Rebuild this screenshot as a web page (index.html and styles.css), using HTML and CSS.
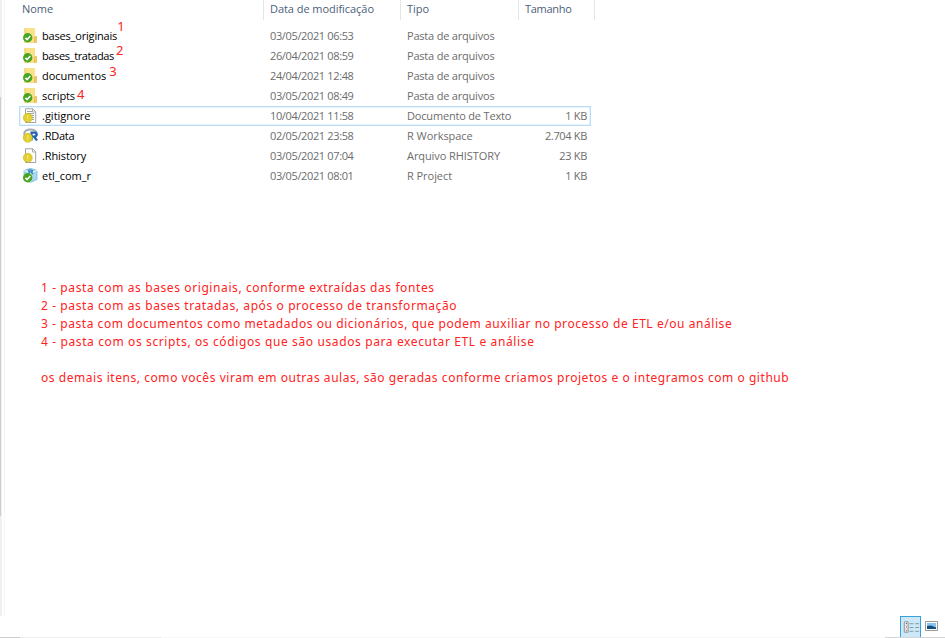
FILE: index.html
```
<!DOCTYPE html>
<html lang="pt-BR">
<head>
<meta charset="utf-8">
<title>etl_com_r</title>
<link rel="stylesheet" href="styles.css">
</head>
<body>
<svg class="defs" width="0" height="0" aria-hidden="true">
<defs>
<g id="check"><circle cx="4.700" cy="9.800" r="4.700" fill="#48a51f"/><path d="M2.400 9.900l1.700 1.700 3.200-3.500" fill="none" stroke="#fff" stroke-width="1.500"/></g>
<g id="pending"><circle cx="4.800" cy="9.800" r="4.500" fill="#e2cf2e" stroke="#c8b526" stroke-width=".6"/><path d="M4.800 7v4M4.800 11.800v1" stroke="#f1e58a" stroke-width="1.100"/></g>
<g id="folder"><path d="M1.500 0H12v15H1.500z" fill="#fbe08a"/><path d="M1.500 0h1v15h-1z" fill="#edc95f"/><path d="M11.500 9l2-1v6.500h-2z" fill="#f3cb58" stroke="#dfb246" stroke-width=".6"/></g>
<g id="page"><path d="M2.500.8h7.200l3 3v10.700H2.500z" fill="#fff" stroke="#999" stroke-width=".9"/><path d="M9.500.8v3.200h3.200" fill="none" stroke="#999" stroke-width=".8"/></g>
</defs>
</svg>
<main class="window">
<aside class="nav"><div class="nav-thumb"></div></aside>
<section class="content">
<header class="grid head"><span class="c-name">Nome</span><span class="c-date">Data de modificação</span><span class="c-type">Tipo</span><span class="c-size">Tamanho</span></header>
<div class="files">
<div class="grid row"><span class="name"><svg viewBox="0 0 16 16"><use href="#folder"/><use href="#check"/></svg><b class="n1">bases_originais</b><sup class="s1">1</sup></span><span class="date">03/05/2021 06:53</span><span class="type t1">Pasta de arquivos</span><span class="size"></span></div>
<div class="grid row"><span class="name"><svg viewBox="0 0 16 16"><use href="#folder"/><use href="#check"/></svg><b class="n2">bases_tratadas</b><sup class="s2">2</sup></span><span class="date">26/04/2021 08:59</span><span class="type t1">Pasta de arquivos</span><span class="size"></span></div>
<div class="grid row"><span class="name"><svg viewBox="0 0 16 16"><use href="#folder"/><use href="#check"/></svg><b class="n3">documentos</b><sup class="s3">3</sup></span><span class="date">24/04/2021 12:48</span><span class="type t1">Pasta de arquivos</span><span class="size"></span></div>
<div class="grid row"><span class="name"><svg viewBox="0 0 16 16"><use href="#folder"/><use href="#check"/></svg><b class="n4">scripts</b><sup class="s4">4</sup></span><span class="date">03/05/2021 08:49</span><span class="type t1">Pasta de arquivos</span><span class="size"></span></div>
<div class="grid row selected"><span class="name"><svg viewBox="0 0 16 16"><use href="#page"/><path d="M4 3.500h5M4 5.500h7M4 7.500h7M8 9.500h3M9 11.500h2" stroke="#888" stroke-width=".8"/><use href="#pending"/></svg><b class="n5">.gitignore</b></span><span class="date">10/04/2021 11:58</span><span class="type t2">Documento de Texto</span><span class="size">1 KB</span></div>
<div class="grid row"><span class="name"><svg viewBox="0 0 16 16"><ellipse cx="7.500" cy="5.500" rx="6.300" ry="4" fill="none" stroke="#a9adb3" stroke-width="2"/><path d="M8.500 12.500V4.700h2.900c3 0 3 3.800 0 3.800H8M11 8.500l3 4" fill="none" stroke="#2364b5" stroke-width="2.200"/><use href="#pending"/></svg><b class="n6">.RData</b></span><span class="date">02/05/2021 23:58</span><span class="type t3">R Workspace</span><span class="size">2.704 KB</span></div>
<div class="grid row"><span class="name"><svg viewBox="0 0 16 16"><use href="#page"/><use href="#pending"/></svg><b class="n7">.Rhistory</b></span><span class="date">03/05/2021 07:04</span><span class="type t4">Arquivo RHISTORY</span><span class="size">23 KB</span></div>
<div class="grid row"><span class="name"><svg viewBox="0 0 16 16"><path d="M1 2.500L7.500.3 14 2.500v9l-6.500 3L1 11.500z" fill="#a9d9ee" stroke="#69b4d4" stroke-width=".7"/><path d="M1 2.500L7.500 5 14 2.500M7.500 5v9.500" fill="none" stroke="#e3f5fc" stroke-width="1"/><path d="M6 6V2h2c2 0 2 2 0 2H6.500M8 4l2 2" fill="none" stroke="#2875ba" stroke-width="1.200"/><use href="#check"/></svg><b class="n8">etl_com_r</b></span><span class="date">03/05/2021 08:01</span><span class="type t5">R Project</span><span class="size">1 KB</span></div>
</div>
<div class="notes">
<p class="p1">1 - pasta com as bases originais, conforme extraídas das fontes</p>
<p class="p2">2 - pasta com as bases tratadas, após o processo de transformação</p>
<p class="p3">3 - pasta com documentos como metadados ou dicionários, que podem auxiliar no processo de ETL e/ou análise</p>
<p class="p4">4 - pasta com os scripts, os códigos que são usados para executar ETL e análise</p>
<p class="p5">os demais itens, como vocês viram em outras aulas, são geradas conforme criamos projetos e o integramos com o github</p>
</div>
</section>
</main>
<footer class="status">
<span class="view active"><svg width="20" height="21" viewBox="0 0 20 21"><path d="M3.500 4.500h4v11h-4z" fill="#fff" stroke="#8d9298"/><path d="M3 8h5M3 12h5" stroke="#a9a9a9" stroke-width=".8"/><path d="M5 6.200h1.500M5 14h1.500" stroke="#555"/><path d="M5 10h1.500" stroke="#d33"/><path d="M9 6.500h4M15 6.500h4M9 10.500h4M15 10.500h4M9 14.500h4M15 14.500h4" stroke="#7d97a5"/></svg></span>
<span class="view"><svg width="14" height="11" viewBox="0 0 14 11"><path d="M.5.5h12v9H.5z" fill="#fff" stroke="#9a9a9a"/><path d="M2 2h9v6H2z" fill="#8bc2ee"/><path d="M2 5l4-.5 5 2V8H2z" fill="#164c7c"/></svg></span>
</footer>
<div class="edge"><div class="edge-thumb"></div></div>
</body>
</html>
```
FILE: styles.css
```
* { box-sizing: border-box; }
body { margin: 0; width: 945px; height: 638px; overflow: hidden; background: #fff; display: flex; flex-direction: column; font: 11px/20px "Open Sans", "Noto Sans", sans-serif; color: #6d6d6d; }
.defs { position: absolute; }
.window { display: flex; height: 616px; }
.nav { width: 5px; background: linear-gradient(90deg, #f0f0f0 2px, #fff 2px 4px, #f5f5f5 4px); padding-top: 97px; }
.nav-thumb { width: 1px; height: 419px; background: #cdcdcd; }
.content { flex: 1; padding-left: 14px; }
.grid { display: grid; grid-template-columns: 245px 137px 118px 72px; width: 572px; white-space: nowrap; }
.head { height: 20px; line-height: 17px; color: #4c607a; width: 576px; grid-template-columns: 245px 137px 118px 76px; letter-spacing: -.05px; }
.head span { border-right: 1px solid #e5e5e5; padding-left: 6px; }
.head .c-name { padding-left: 3px; }
.head .c-size { letter-spacing: -.3px; }
.files { padding-top: 6px; }
.row { height: 20px; }
.row > span { padding-left: 6px; }
.row .name { display: flex; padding-left: 3px; color: #000; }
.row .date { letter-spacing: -.36px; }
.row .type { letter-spacing: -.18px; }
.row .t1 { letter-spacing: -.2px; }
.row .t4 { letter-spacing: -.08px; }
.row .t3, .row .t5 { letter-spacing: -.05px; }
.name svg { width: 16px; height: 16px; margin: 2px 3px 0 1px; flex: none; }
.name b { font-weight: 400; }
.n1 { letter-spacing: -.18px; }
.n2 { letter-spacing: -.36px; }
.n4, .n7 { letter-spacing: -.1px; }
.n6 { letter-spacing: -.25px; }
.selected { box-shadow: inset 0 0 0 1px #b9dcf7, inset 0 0 0 2px #e8f4fd; }
.row .size { text-align: right; padding: 0 4px 0 0; letter-spacing: -.33px; }
sup { color: #f22; font: 13px/18px "Noto Sans", sans-serif; height: 18px; }
.s1 { margin-top: -9px; }
.s2 { margin-top: -5px; margin-left: 2px; }
.s3 { margin-top: -4px; margin-left: 3px; }
.s4 { margin-top: -1px; margin-left: 2px; }
.notes { margin: 93px 0 0 22px; color: #f22; font: 12px/18px "Noto Sans", sans-serif; white-space: nowrap; letter-spacing: .6px; }
.notes p { margin: 0; }
.notes .p3 { letter-spacing: .56px; }
.notes .p4 { letter-spacing: .62px; }
.notes .p5 { margin-top: 18px; letter-spacing: .55px; }
.status { height: 21px; display: flex; align-items: center; justify-content: flex-end; padding-right: 6px; gap: 4px; }
.view { display: flex; }
.active { width: 21px; height: 21px; border: 1px solid #35a1dd; border-bottom: 0; background: #cce8f6; }
.edge { height: 1px; background: linear-gradient(90deg, #ececec 161px, #f8f8f8 161px 885px, #d5d5d5 885px); }
.edge-thumb { width: 20px; height: 1px; background: #cdcdcd; }
```
